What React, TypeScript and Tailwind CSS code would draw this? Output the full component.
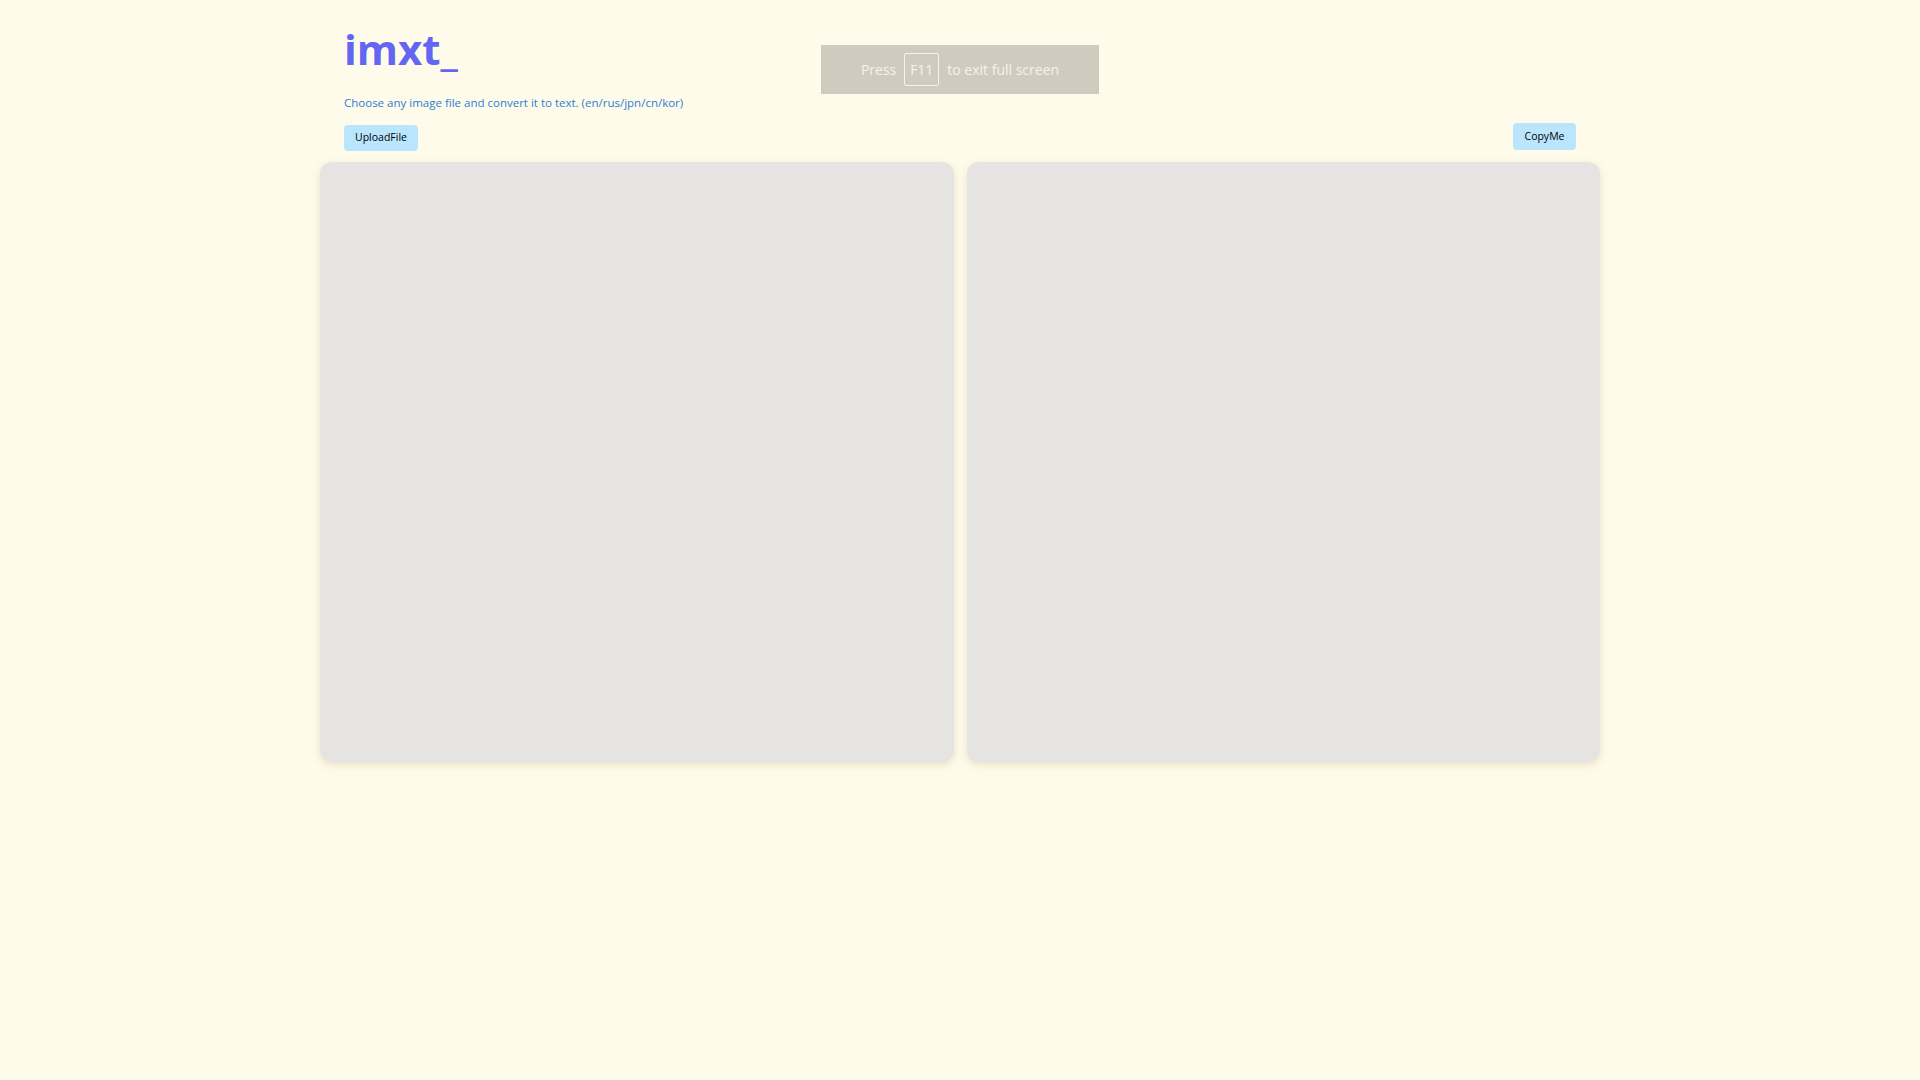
import React from "react";

export default function App() {
  return (
    <div
      className="min-h-screen w-full bg-[#fffbea] relative"
      style={{ fontFamily: '"Open Sans", "Noto Sans", sans-serif' }}
    >
      <div className="mx-auto w-[1280px] pt-[28px]">
        <div className="flex items-end justify-between px-[24px]">
          <div className="flex flex-col items-start">
            <h1 className="text-[42px] leading-none font-bold text-[#6366f1]">imxt_</h1>
            <p className="mt-[25px] text-[11.5px] leading-[16px] text-[#2b80d2]">
              Choose any image file and convert it to text. (en/rus/jpn/cn/kor)
            </p>
            <button className="mt-[14px] w-[74px] h-[26px] rounded-[4px] bg-[#bae6fd] text-[10.5px] text-black flex items-center justify-center">
              UploadFile
            </button>
          </div>
          <button className="mb-[1px] w-[63px] h-[27px] rounded-[4px] bg-[#bae6fd] text-[10.5px] text-black flex items-center justify-center">
            CopyMe
          </button>
        </div>
        <div className="mt-[11px] grid grid-cols-2 gap-[13px]">
          <div className="h-[600px] rounded-[12px] bg-[#e5e4e2] shadow-[0_3px_8px_rgba(120,110,60,0.18)]" />
          <div className="h-[600px] rounded-[12px] bg-[#e5e4e2] shadow-[0_3px_8px_rgba(120,110,60,0.18)]" />
        </div>
      </div>

      <div className="absolute left-[821px] top-[45px] w-[278px] h-[49px] bg-[#cfccbf] flex items-center justify-center gap-[8px] text-[14px] text-[#f6f3e8]">
        <span>Press</span>
        <span className="w-[35px] h-[33px] border border-[#f6f3e8] rounded-[2px] flex items-center justify-center">F11</span>
        <span>to exit full screen</span>
      </div>
    </div>
  );
}
